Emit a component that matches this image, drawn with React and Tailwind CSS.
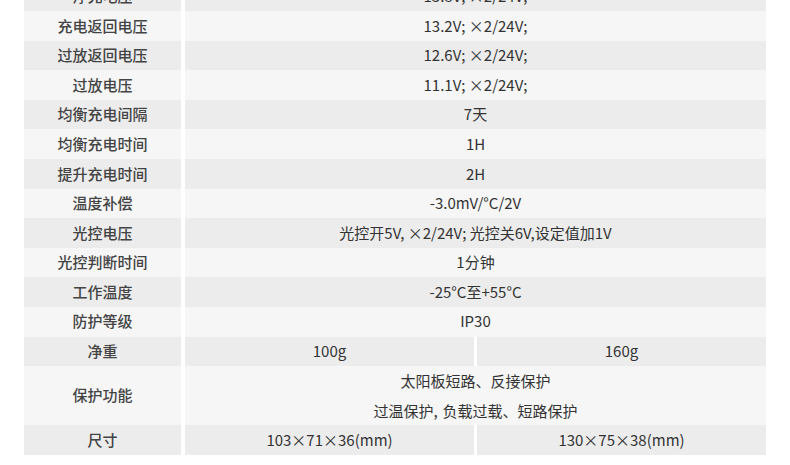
import React from "react";

const rows = [
  ["浮充电压", "13.8V; ×2/24V;"],
  ["充电返回电压", "13.2V; ×2/24V;"],
  ["过放返回电压", "12.6V; ×2/24V;"],
  ["过放电压", "11.1V; ×2/24V;"],
  ["均衡充电间隔", "7天"],
  ["均衡充电时间", "1H"],
  ["提升充电时间", "2H"],
  ["温度补偿", "-3.0mV/°C/2V"],
  ["光控电压", "光控开5V, ×2/24V; 光控关6V,设定值加1V"],
  ["光控判断时间", "1分钟"],
  ["工作温度", "-25°C至+55°C"],
  ["防护等级", "IP30"],
];

function Row({ label, dark, children, tall }) {
  return (
    <div className={`flex ${tall ? "h-[59.2px]" : "h-[29.6px]"}`}>
      <div className={`w-[157px] shrink-0 flex items-center justify-center font-medium text-[#444] ${dark ? "bg-[#ececec]" : "bg-[#f6f6f6]"}`}>
        {label}
      </div>
      <div className="w-[4px] shrink-0 bg-white" />
      {children}
    </div>
  );
}

export default function App() {
  return (
    <div
      className="w-[790px] h-[465px] overflow-hidden bg-white px-[24px] text-[15px] text-[#333]"
      style={{ fontFamily: '"Noto Sans CJK SC", "Noto Sans", sans-serif' }}
    >
      <div className="w-[742px] -mt-[18.6px]">
        {rows.map(([l, v], i) => (
          <Row key={l} label={l} dark={i % 2 === 0}>
            <div className={`flex-1 flex items-center justify-center ${i % 2 === 0 ? "bg-[#ececec]" : "bg-[#f6f6f6]"}`}>
              {v}
            </div>
          </Row>
        ))}
        <Row label="净重" dark>
          <div className="flex-1 flex items-center justify-center bg-[#ececec]">100g</div>
          <div className="w-[3px] shrink-0 bg-white" />
          <div className="flex-1 flex items-center justify-center bg-[#ececec]">160g</div>
        </Row>
        <Row label="保护功能" tall>
          <div className="flex-1 flex flex-col bg-[#f6f6f6]">
            <div className="h-[29.6px] flex items-center justify-center">太阳板短路、反接保护</div>
            <div className="h-[29.6px] flex items-center justify-center pt-[1px]">
              过温保护<span className="mr-[5px]">,</span>负载过载、短路保护
            </div>
          </div>
        </Row>
        <Row label="尺寸" dark>
          <div className="flex-1 flex items-center justify-center bg-[#ececec]">103×71×36(mm)</div>
          <div className="w-[3px] shrink-0 bg-white" />
          <div className="flex-1 flex items-center justify-center bg-[#ececec]">130×75×38(mm)</div>
        </Row>
      </div>
    </div>
  );
}
